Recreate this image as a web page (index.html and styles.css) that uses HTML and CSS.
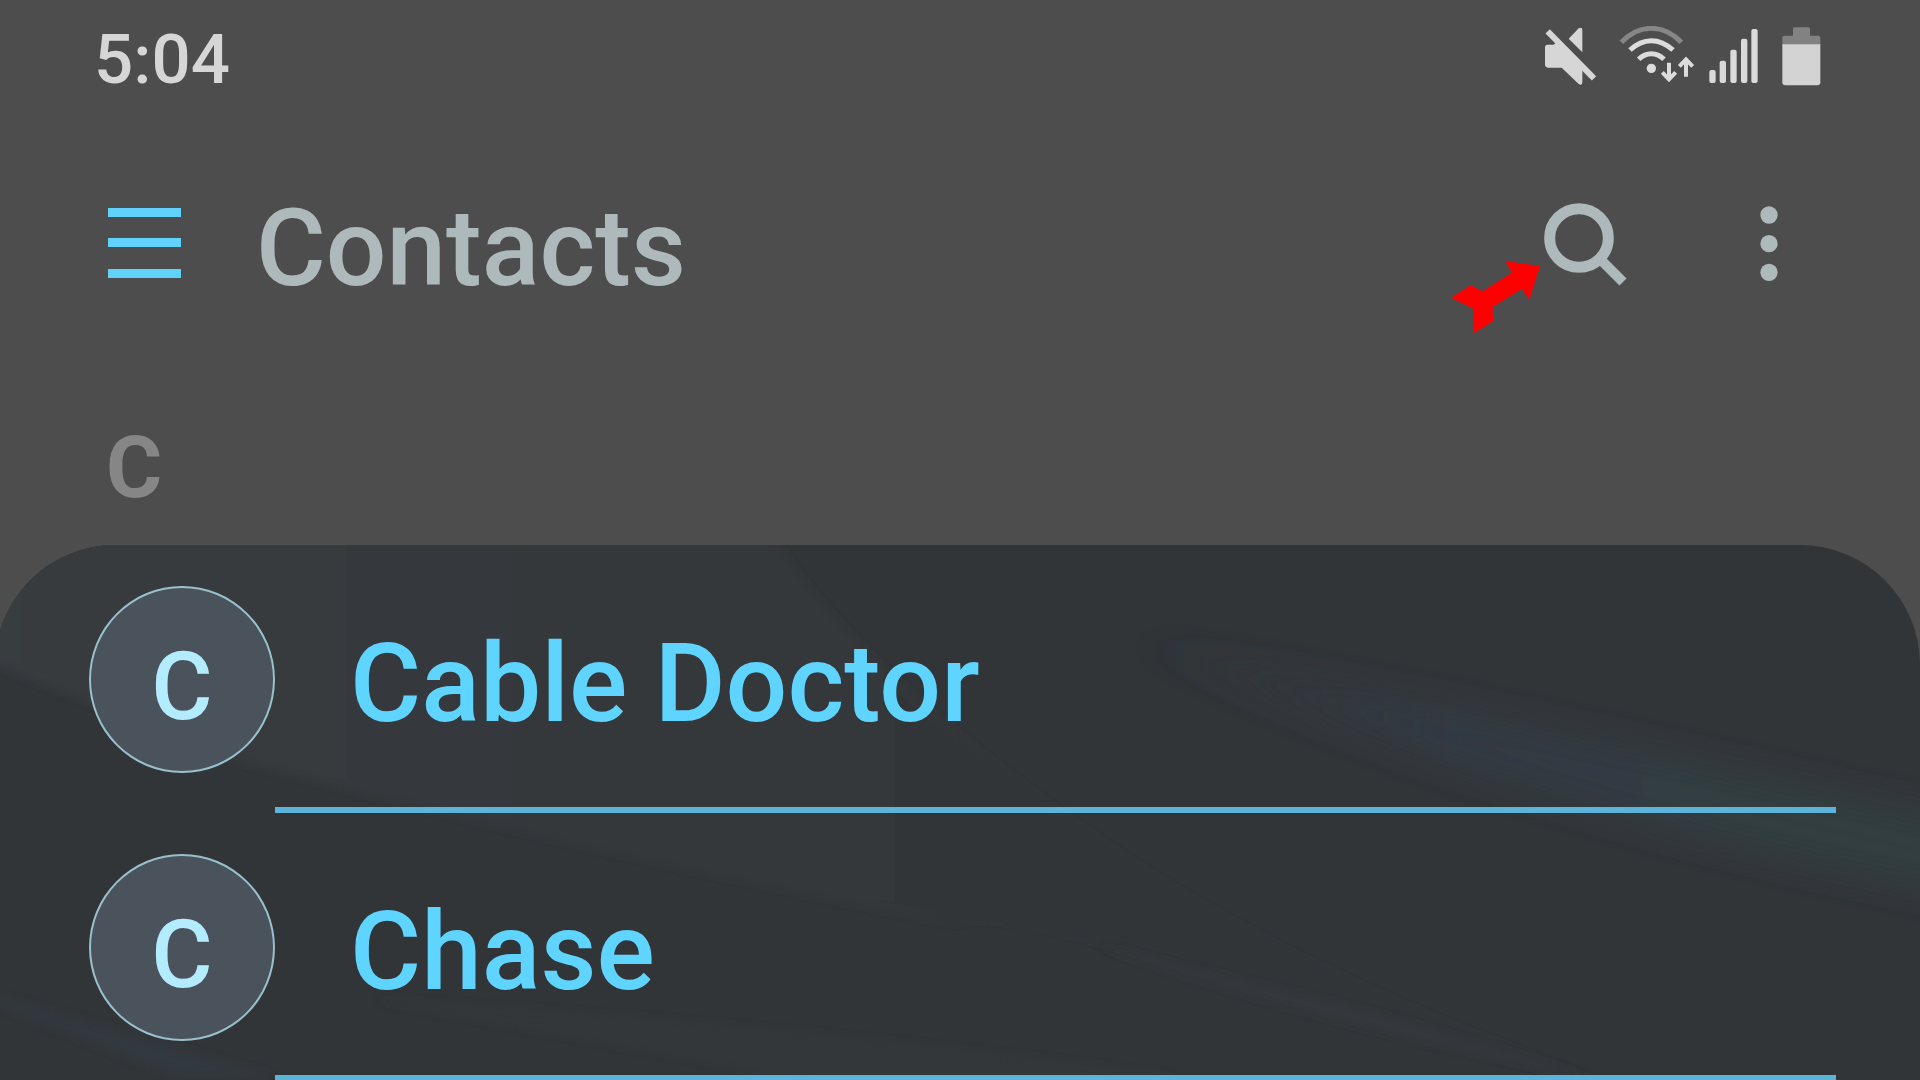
FILE: index.html
```html
<!DOCTYPE html>
<html lang="en">
<head>
  <meta charset="UTF-8">
  <meta name="viewport" content="width=device-width, initial-scale=1">
  <title>Contacts</title>
  <link rel="stylesheet" href="styles.css">
</head>
<body>
  <div class="status-bar">
    <span class="time">5:04</span>
    <div class="status-icons">
      <!-- muted speaker -->
      <svg width="61" height="68" viewBox="72 48 183 204">
        <path fill="#d6d6d6" d="M146 86L176 55Q187 50 187 60V127ZM82 104H100L112 96L187 172V216Q187 229 176 222L125 173H84Q75 173 75 163V113Q75 104 82 104Z"/>
        <path stroke="#d6d6d6" stroke-width="18" d="M83 64L222 205"/>
      </svg>
      <!-- wifi with data arrows -->
      <svg width="79" height="68" viewBox="291 48 237 204" fill="none" stroke="#dcdcdc" stroke-width="15">
        <path stroke="#868686" d="M304 97Q344 55 394 55T484 97"/>
        <path d="M330 120Q360 92 394 92T459 120"/>
        <path d="M356 148Q373 131 394 131T432 148"/>
        <circle cx="394" cy="175" r="14" fill="#dcdcdc" stroke="none"/>
        <path stroke-width="12" d="M447 158V208M427 187L447 208L467 187M498 200V150M478 169L498 148L518 169"/>
      </svg>
      <!-- signal -->
      <svg width="53" height="68" viewBox="564 48 159 204" fill="#dadada">
        <rect x="568" y="180" width="19" height="39" rx="6"/>
        <rect x="599" y="152" width="19" height="67" rx="6"/>
        <rect x="631" y="119" width="19" height="100" rx="6"/>
        <rect x="663" y="86" width="19" height="133" rx="6"/>
        <rect x="694" y="57" width="19" height="162" rx="6"/>
      </svg>
      <!-- battery -->
      <svg width="48" height="68" viewBox="759 48 144 204">
        <path fill="#828282" d="M787 104V84Q787 77 794 77H819V57Q819 52 824 52H865Q870 52 870 57V77H894Q901 77 901 84V104Z"/>
        <path fill="#d3d3d3" d="M787 103H901V217Q901 226 892 226H796Q787 226 787 217Z"/>
      </svg>
    </div>
  </div>

  <header class="toolbar">
    <button class="icon-btn" aria-label="Menu">
      <svg width="73" height="72" viewBox="0 0 73 72" fill="#61d3fb">
        <rect width="73" height="9"/>
        <rect y="30" width="73" height="9"/>
        <rect y="61" width="73" height="9"/>
      </svg>
    </button>
    <h1 class="title">Contacts</h1>
    <div class="actions">
      <button class="icon-btn" aria-label="Search">
        <svg width="85" height="85" viewBox="339 63 255 255" fill="none" stroke="#adb9bb">
          <circle cx="447" cy="171" r="88" stroke-width="33"/>
          <path stroke-width="30" d="M510 234L579 303"/>
        </svg>
        <svg class="pointer" width="90" height="73" viewBox="63 240 270 219" fill="#f00">
          <path d="M63 350L122 313L158 331L246 275L226 240L330 255L298 356L276 323L188 378L189 421L131 457L130 383Z"/>
        </svg>
      </button>
      <button class="icon-btn" aria-label="More options">
        <svg width="20" height="78" viewBox="987 75 60 234" fill="#adb9bb">
          <circle cx="1017" cy="105" r="26"/>
          <circle cx="1017" cy="191" r="26"/>
          <circle cx="1017" cy="277" r="26"/>
        </svg>
      </button>
    </div>
  </header>

  <h2 class="section-letter">C</h2>

  <main class="sheet">
    <svg class="wallpaper" viewBox="0 0 1925 535" preserveAspectRatio="none" aria-hidden="true">
      <defs>
        <linearGradient id="glow">
          <stop offset="0" stop-color="#393c3f"/>
          <stop offset=".3" stop-color="#36393c"/>
          <stop offset=".65" stop-color="#333639"/>
          <stop offset=".8" stop-color="#323538"/>
        </linearGradient>
        <linearGradient id="streak">
          <stop offset="0" stop-color="#323840" stop-opacity="0"/>
          <stop offset=".4" stop-color="#323a43"/>
          <stop offset="1" stop-color="#333e40"/>
        </linearGradient>
        <filter id="soft"><feGaussianBlur stdDeviation="4"/></filter>
        <filter id="softer" x="-10%" y="-30%" width="120%" height="160%"><feGaussianBlur stdDeviation="16"/></filter>
      </defs>
      <path fill="url(#glow)" filter="url(#soft)" d="M-20 -20H770Q850 120 1110 300Q1300 430 1600 535Q1400 490 1200 425T960 378Q560 300 245 216L-20 112Z"/>
      <path fill="#36393c" filter="url(#soft)" d="M1100 400L1200 425Q1400 470 1590 532Q1330 480 1100 400Z"/>
      <path fill="#35383b" filter="url(#soft)" d="M380 455Q800 480 1180 532L900 550Z" opacity=".7"/>
      <path fill="url(#streak)" filter="url(#softer)" d="M1120 90Q1500 170 1960 275V350Q1500 260 1120 90Z"/>
      <path fill="#313b42" filter="url(#soft)" d="M0 450Q120 485 280 532H180Q80 490 0 460Z" opacity=".7"/>
    </svg>
    <ul class="contacts">
      <li class="contact">
        <span class="avatar">C</span>
        <a class="name" href="#">Cable Doctor</a>
      </li>
      <li class="contact">
        <span class="avatar">C</span>
        <a class="name" href="#">Chase</a>
      </li>
    </ul>
  </main>
</body>
</html>
```

FILE: styles.css
```css
* {
  box-sizing: border-box;
}
body {
  margin: 0;
  height: 100vh;
  display: flex;
  flex-direction: column;
  overflow: hidden;
  background: #4d4d4d;
  font-family: Roboto, "Liberation Sans", sans-serif;
  font-weight: 500;
}
svg {
  display: block;
}

.status-bar {
  display: flex;
  align-items: center;
  justify-content: space-between;
  padding: 24px 99px 0 94px;
}
.time {
  font-size: 69px;
  line-height: 72px;
  color: #d6d6d6;
}
.status-icons {
  display: flex;
  gap: 12px;
}

.toolbar {
  display: flex;
  align-items: center;
  padding: 89px 141px 0 108px;
}
.icon-btn {
  position: relative;
  padding: 0;
  border: none;
  background: none;
  cursor: pointer;
}
.title {
  margin: 0 0 0 75px;
  padding-top: 10px;
  font-size: 107px;
  line-height: 108px;
  font-weight: 500;
  color: #adb9bb;
}
.actions {
  display: flex;
  align-items: center;
  gap: 131px;
  margin-left: auto;
}
/* red arrow lying next to the search icon */
.pointer {
  position: absolute;
  top: 59px;
  left: -92px;
}

.section-letter {
  margin: 115px 0 27px 106px;
  font-size: 86px;
  line-height: 100px;
  font-weight: 700;
  color: #868686;
}

.sheet {
  position: relative;
  flex: 1;
  min-height: 0;
  margin-left: -5px;
  overflow: hidden;
  border-radius: 120px 120px 0 0;
  background: #323538;
}
.wallpaper {
  position: absolute;
  top: 0;
  left: 0;
  width: 100%;
  height: 100%;
}
.contacts {
  position: relative;
  margin: 0;
  padding: 0;
  list-style: none;
}
.contact {
  display: flex;
  height: 268px;
  padding: 0 84px 0 94px;
}
.avatar {
  flex: none;
  display: flex;
  align-items: center;
  justify-content: center;
  width: 186px;
  height: 187px;
  margin-top: 41px;
  padding-top: 14px;
  border: 2px solid #98c0cd;
  border-radius: 50%;
  background: #4a525c;
  font-size: 94px;
  color: #b3ecff;
}
.name {
  flex: 1;
  display: flex;
  align-items: center;
  padding: 16px 0 0 75px;
  border-bottom: 6px solid #5cb5d8;
  font-size: 109px;
  color: #5fd4ff;
  text-decoration: none;
}
```
